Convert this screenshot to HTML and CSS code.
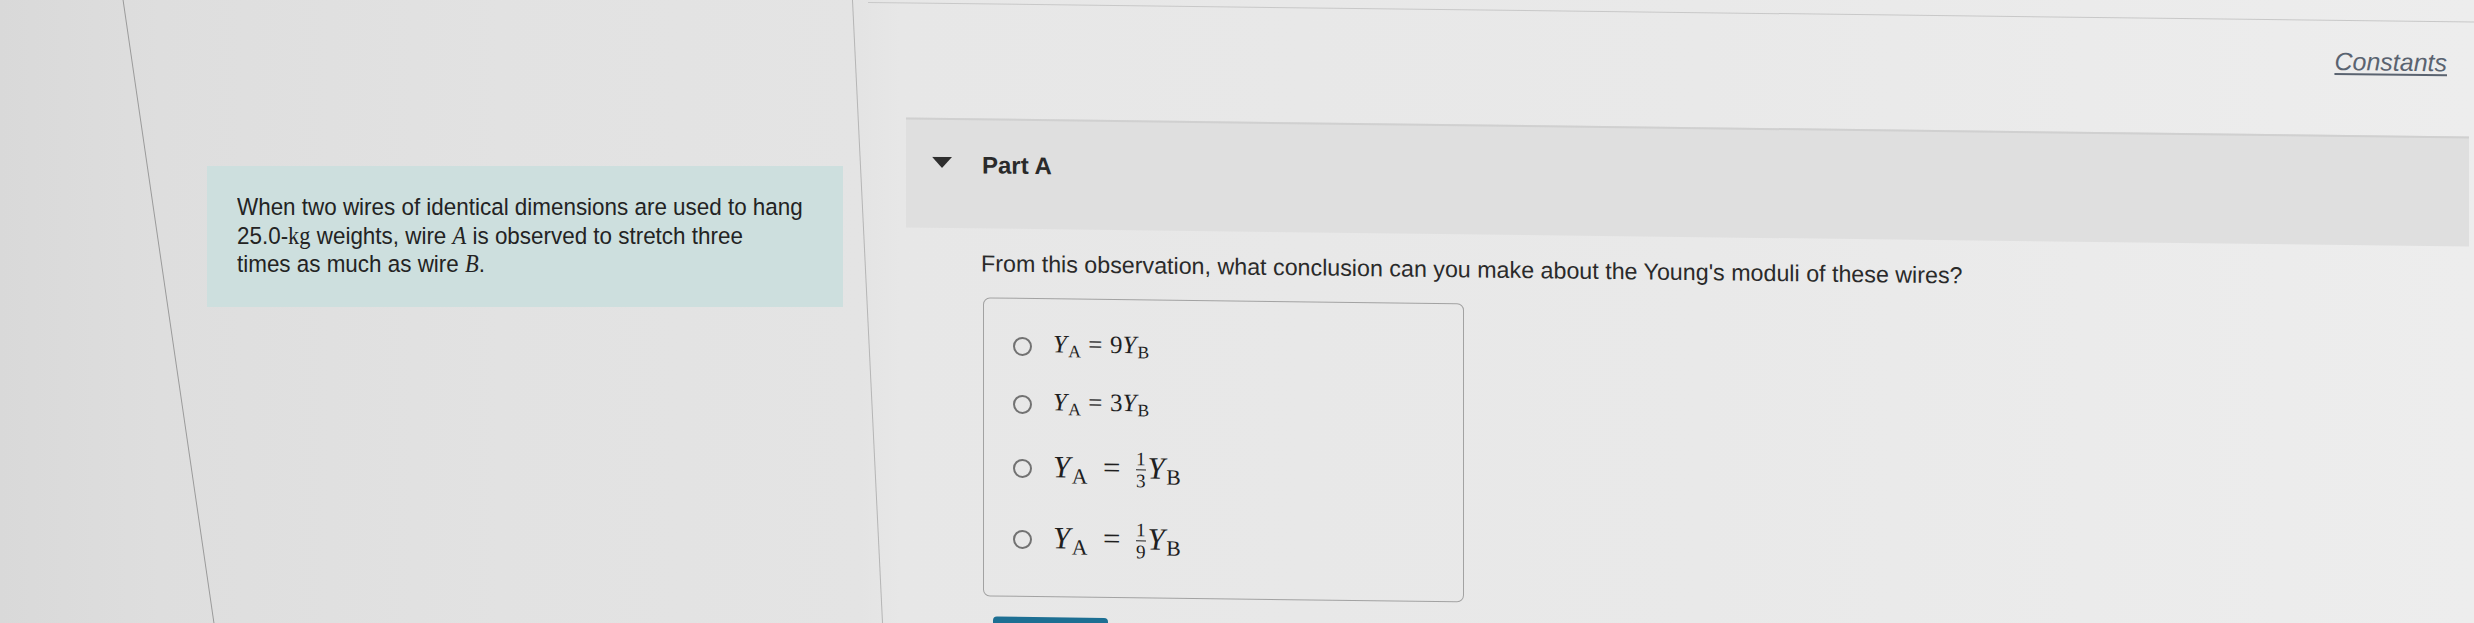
FILE: index.html
```html
<!DOCTYPE html>
<html lang="en">
<head>
<meta charset="utf-8">
<title>Part A</title>
<link rel="stylesheet" href="styles.css">
</head>
<body>
<div class="page">
  <div class="gutter"></div>
  <div class="rule rule-left"></div>
  <section class="intro">
    <div class="intro-box">
      <p class="intro-text">When two wires of identical dimensions are used to hang<br>25.0-<span class="rm">kg</span> weights, wire <i class="mi">A</i> is observed to stretch three<br>times as much as wire <i class="mi">B</i>.</p>
    </div>
  </section>
  <div class="rule rule-mid"></div>
  <main class="work">
    <div class="top-rule"></div>
    <div class="toolbar"><a class="constants" href="#">Constants</a></div>
    <div class="part-header">
      <svg class="caret" viewBox="0 0 20 11" width="20" height="11"><polygon points="0,0 20,0 10,11"/></svg>
      <h2 class="part-title">Part A</h2>
    </div>
    <p class="question">From this observation, what conclusion can you make about the Young's moduli of these wires?</p>
    <div class="choices">
      <label class="choice"><span class="radio"></span><span class="math"><i class="mi">Y</i><span class="sub">A</span><span class="rel">=</span>9<i class="mi">Y</i><span class="sub">B</span></span></label>
      <label class="choice"><span class="radio"></span><span class="math"><i class="mi">Y</i><span class="sub">A</span><span class="rel">=</span>3<i class="mi">Y</i><span class="sub">B</span></span></label>
      <label class="choice choice-tall"><span class="radio"></span><span class="math math-lg"><i class="mi">Y</i><span class="sub">A</span><span class="rel">=</span><span class="frac"><span>1</span><span class="frac-bar"></span><span>3</span></span><i class="mi">Y</i><span class="sub">B</span></span></label>
      <label class="choice choice-tall"><span class="radio"></span><span class="math math-lg"><i class="mi">Y</i><span class="sub">A</span><span class="rel">=</span><span class="frac"><span>1</span><span class="frac-bar"></span><span>9</span></span><i class="mi">Y</i><span class="sub">B</span></span></label>
    </div>
    <button class="submit" type="button"></button>
  </main>
</div>
</body>
</html>
```
FILE: styles.css
```css
html, body {
  margin: 0;
  padding: 0;
}

body {
  width: 2474px;
  height: 623px;
  overflow: hidden;
  font-family: "Liberation Sans", Arial, sans-serif;
  color: #272727;
  background: #e6e6e6;
}

.page {
  display: flex;
  height: 623px;
  overflow: hidden;
  background: linear-gradient(90deg, #d9d9d9 0px, #dedede 160px, #e2e2e2 500px, #e4e4e4 860px, #e7e7e7 900px, #e9e9e9 1700px, #ededed 2474px);
}

.gutter {
  flex: none;
  width: 168px;
}

.rule {
  flex: none;
  width: 1px;
  background: #9a9a9a;
}

.rule-left {
  transform: skewX(8.3deg);
}

.rule-mid {
  background: #b5b5b5;
  transform: skewX(2.76deg);
}

.intro {
  flex: none;
  width: 698px;
  box-sizing: border-box;
  padding: 166px 0 0 38px;
}

.intro-box {
  width: 636px;
  height: 141px;
  box-sizing: border-box;
  padding: 27px 0 0 30px;
  background: #cddfde;
}

.intro-text {
  margin: 0;
  font-size: 24.5px;
  line-height: 28.5px;
  white-space: nowrap;
  color: #232323;
  transform: scaleX(0.915);
  transform-origin: left top;
}

.rm {
  font-family: "Liberation Serif", "Times New Roman", serif;
}

.mi {
  font-family: "Liberation Serif", "Times New Roman", serif;
  font-style: italic;
}

.work {
  flex: 1;
  display: flex;
  flex-direction: column;
  align-items: flex-start;
  transform: skewY(0.7deg);
  transform-origin: left top;
}

.work > * {
  flex: none;
}

.top-rule {
  align-self: stretch;
  height: 1px;
  margin-top: 2px;
  background: #c8c8c8;
}

.toolbar {
  align-self: stretch;
  height: 30px;
  margin-top: 25px;
  padding-right: 27px;
  text-align: right;
  line-height: 30px;
}

.constants {
  font-size: 25px;
  font-style: italic;
  color: #5a6370;
  text-decoration: underline;
  text-underline-offset: 3px;
}

.part-header {
  align-self: stretch;
  display: flex;
  align-items: flex-start;
  gap: 30px;
  height: 110px;
  box-sizing: border-box;
  margin: 59px 5px 0 38px;
  padding: 31px 0 0 26px;
  border-top: 2px solid #d0d0d0;
  background: #dfdfdf;
}

.caret {
  flex: none;
  margin-top: 6px;
  fill: #2e2e2e;
}

.part-title {
  margin: 0;
  font-size: 24px;
  line-height: 28px;
  font-weight: bold;
  color: #2a2a2a;
}

.question {
  margin: 21px 0 0 113px;
  font-size: 23.25px;
  line-height: 28px;
  color: #2a2a2a;
}

.choices {
  width: 481px;
  height: 299px;
  box-sizing: border-box;
  margin: 20px 0 0 115px;
  padding: 18px 0 0 29px;
  border: 1.5px solid #a2a2a2;
  border-radius: 7px;
}

.choice {
  display: flex;
  align-items: center;
  gap: 21px;
  height: 58px;
}

.choice-tall {
  height: 71px;
}

.radio {
  flex: none;
  width: 19px;
  height: 19px;
  box-sizing: border-box;
  border: 2px solid #727272;
  border-radius: 50%;
}

.math {
  font-family: "Liberation Serif", "Times New Roman", serif;
  font-size: 25px;
  color: #1f1f1f;
  white-space: nowrap;
}

.math-lg {
  font-size: 31px;
}

.math .mi {
  margin-right: 0.05em;
}

.sub {
  font-size: 0.7em;
  vertical-align: -0.28em;
}

.rel {
  margin: 0 0.3em;
}

.math-lg .rel {
  margin: 0 0.5em;
}

.frac {
  display: inline-flex;
  flex-direction: column;
  align-items: center;
  margin: 0 0.1em 0 0;
  font-size: 0.62em;
  line-height: 1;
  vertical-align: 0.67em;
}

.frac-bar {
  align-self: stretch;
  height: 1px;
  margin: 1px 0;
  background: currentColor;
}

.submit {
  width: 115px;
  height: 40px;
  margin: 20px 0 0 125px;
  border: 0;
  border-radius: 4px;
  background: #1d6f93;
}
```
